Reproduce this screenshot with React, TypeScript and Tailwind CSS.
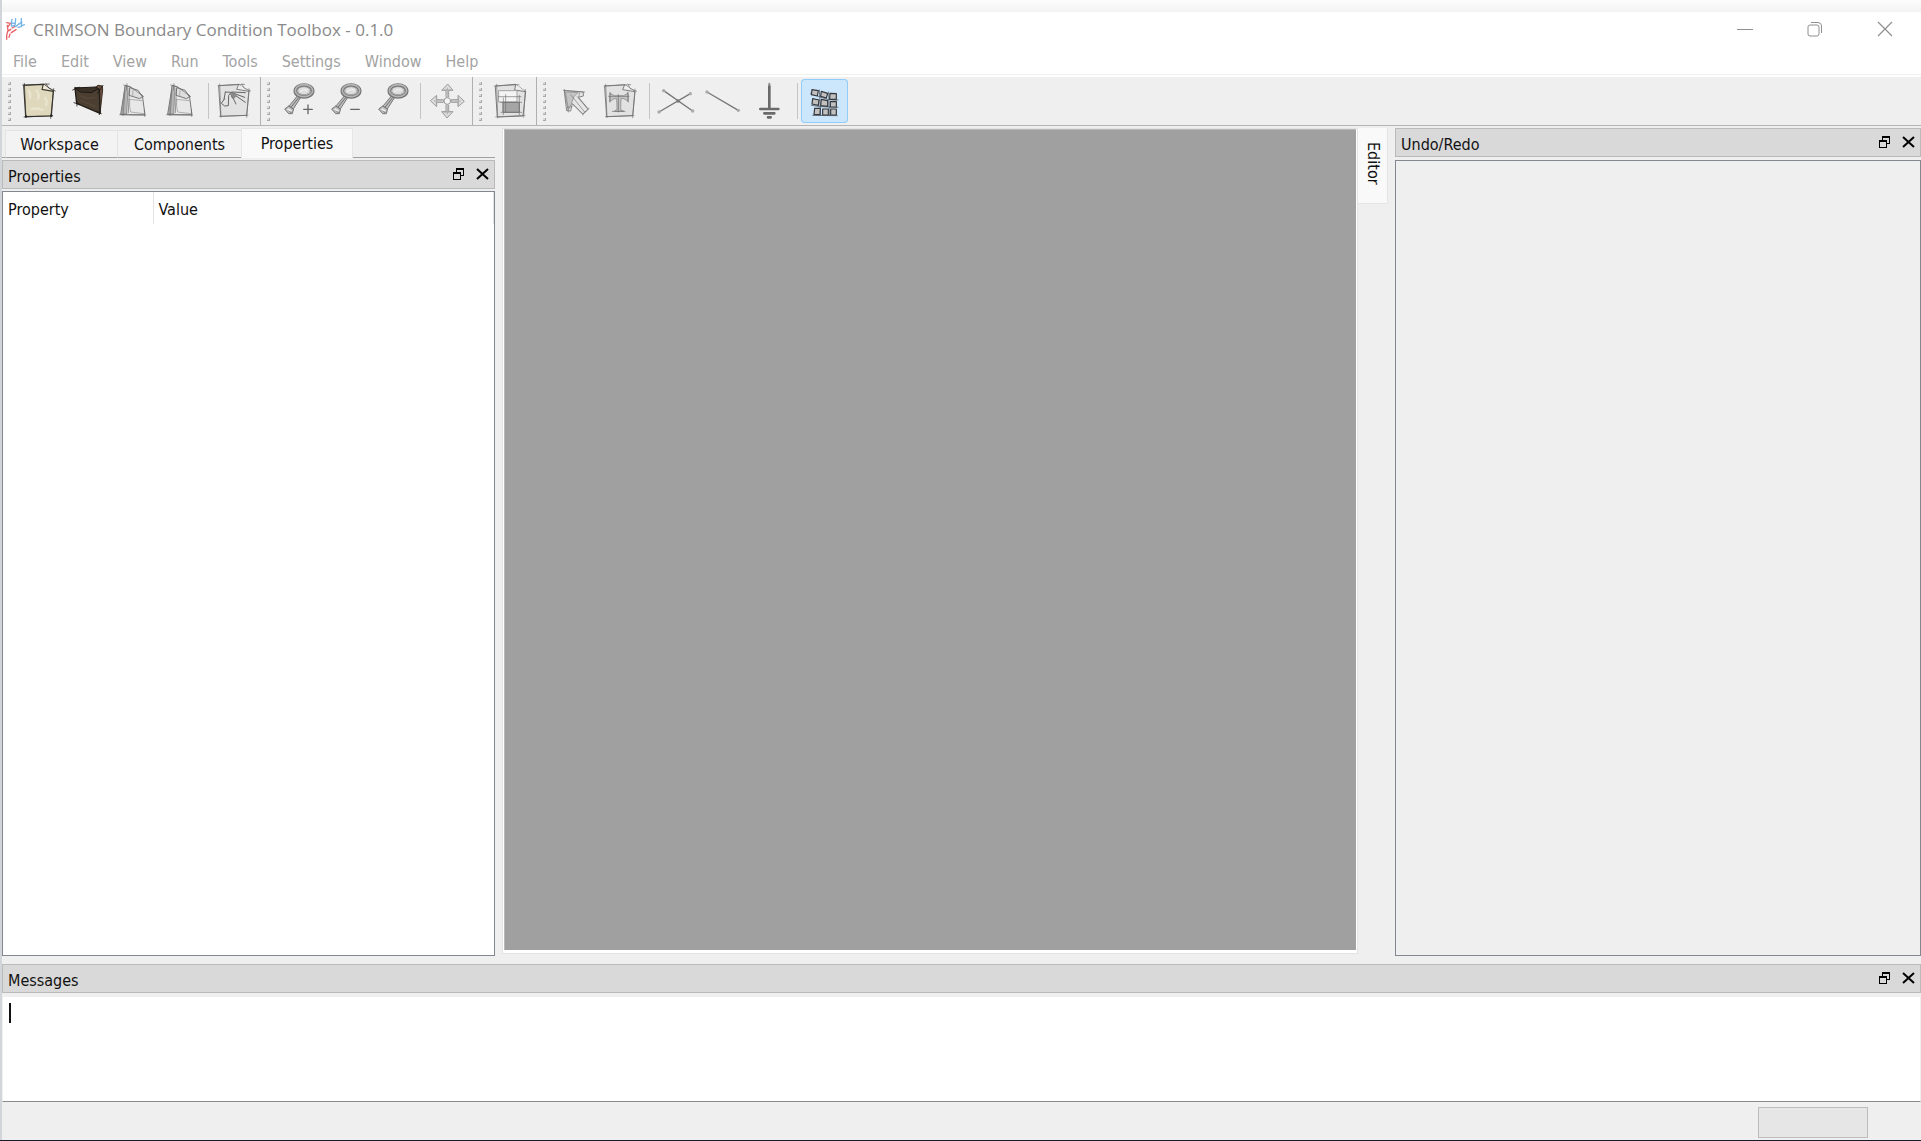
import React from "react";

function Glyph({ box, children }: { box: string; children: React.ReactNode }) {
  return (
    <svg viewBox={box} className="h-[44px] w-[46px]" fill="none" strokeLinecap="round" strokeLinejoin="round" aria-hidden="true">
      {children}
    </svg>
  );
}

function NewIcon() {
  return (
    <Glyph box="52 27 138 132">
      <path d="M69 46 L128 43 L158 64 L152 138 L75 140 Z" fill="#dfd8bd" stroke="#3d3b33" strokeWidth="3.5" />
      <path d="M84 62 Q92 72 88 84 M108 62 Q118 74 112 86 M92 118 Q108 112 126 120 M134 84 Q140 94 136 106" stroke="#e9e4ce" strokeWidth="7" />
      <path d="M128 43 L124 58 L158 64" fill="#f0ecd9" stroke="#3d3b33" strokeWidth="3.5" />
      <path d="M66 45 L146 42 M71 40 L76 143 M150 145 L159 56 M70 141 L156 137 M136 41 L144 54 L164 63" stroke="#2f2e28" strokeWidth="2" />
      <circle cx="76" cy="139" r="3.5" fill="#222" />
      <circle cx="152" cy="137" r="3.5" fill="#222" />
    </Glyph>
  );
}

function OpenIcon() {
  return (
    <Glyph box="193 27 138 132">
      <path d="M284 52 L292 46 L305 48 L306 60 L298 130 Z" fill="#6b5040" stroke="#3a2d22" strokeWidth="3" />
      <path d="M223 54 L296 58 L298 130 L228 100 Z" fill="#4b3f32" stroke="#211c17" strokeWidth="4" />
      <path d="M223 54 L284 51 L294 56 L272 68 L240 66 Z" fill="#3b3026" stroke="#1f1a15" strokeWidth="3" />
      <path d="M240 78 L262 86 L284 82 M240 92 L262 100 L284 110" stroke="#574a3b" strokeWidth="4" />
      <path d="M216 60 L236 52 M229 108 L228 92 M220 98 L236 103 M296 134 L298 120 M288 124 L302 131 M291 70 L307 46" stroke="#1c1814" strokeWidth="2.5" />
    </Glyph>
  );
}

function SaveIcon() {
  return (
    <Glyph box="333 27 138 132">
      <path d="M374 47 L386 50 L424 76 L432 134 L360 134 Z" fill="#e8e8e8" stroke="#777" strokeWidth="3" />
      <path d="M372 48 L362 132 L377 132 L381 54 Z" fill="#b5b5b5" stroke="#777" strokeWidth="2" />
      <path d="M386 54 L384 76 L416 86 L424 80 L412 62 Z" fill="#dedede" stroke="#777" strokeWidth="3" />
      <path d="M396 60 L395 77 M386 88 Q384 110 389 126 L428 131 M384 88 L424 92" stroke="#b0b0b0" strokeWidth="3" />
      <path d="M378 41 L376 60 M368 45 L388 50 L428 80 M356 134 L434 136 M372 60 L366 137 M430 120 L431 139 M385 60 L382 128" stroke="#6b6b6b" strokeWidth="2" />
    </Glyph>
  );
}

function PaperOutline() {
  return (
    <>
      <path d="M655 47 L714 43 L745 64 L738 136 L661 139 Z" fill="#e2e2e2" stroke="#808080" strokeWidth="3" />
      <path d="M714 43 L708 58 L745 64" fill="#eee" stroke="#808080" strokeWidth="3" />
      <path d="M652 47 L732 43 M657 42 L661 142 M738 142 L745 56 M656 139 L742 136 M724 41 L730 54 L750 63" stroke="#707070" strokeWidth="2" />
    </>
  );
}

function ExportIcon() {
  return (
    <Glyph box="637 27 138 132">
      <PaperOutline />
      <path d="M674 66 L670 88 M674 66 L692 67 L684 76 L683 107 L672 108 L662 100 L672 86 M690 70 L706 102 M692 68 L734 97 M694 66 L734 68 M694 68 L732 82 M690 70 L695 84 L704 80" stroke="#666" strokeWidth="3" />
      <path d="M684 66 L710 74 L700 86 Z" fill="#8b8b8b" />
    </Glyph>
  );
}

function LensIcon({ sign }: { sign?: "plus" | "minus" }) {
  return (
    <Glyph box="52 27 138 132">
      <path d="M113 78 L89 107 L75 117 L87 131 L98 131 L102 115 L122 84 Z" fill="#bdbdbd" stroke="#777" strokeWidth="3" />
      <path d="M116 84 L94 112 M82 114 L94 128 M88 108 L101 117" stroke="#6e6e6e" strokeWidth="3" />
      <path d="M84 117 L94 122" stroke="#eee" strokeWidth="5" />
      <ellipse cx="133" cy="63" rx="26" ry="18" stroke="#737373" strokeWidth="11" />
      <ellipse cx="133" cy="62" rx="26" ry="18" stroke="#b5b5b5" strokeWidth="5" />
      <ellipse cx="133" cy="62" rx="19" ry="12" fill="#dedede" stroke="#7b7b7b" strokeWidth="2" />
      <path d="M122 64 Q131 54 142 60" stroke="#f4f4f4" strokeWidth="3" />
      {sign && <path d="M132 118 H158" stroke="#666" strokeWidth="4" />}
      {sign === "plus" && <path d="M145 105 V131" stroke="#666" strokeWidth="4" />}
    </Glyph>
  );
}

function MoveIcon() {
  return (
    <Glyph box="495 27 138 132">
      <g fill="#dcdcdc" stroke="#9c9c9c" strokeWidth="3">
        {[0, 90, 180, 270].map((angle) => (
          <g key={angle} transform={`rotate(${angle} 562 93)`}>
            <path d="M558 80 V61 H545 L563 42 L579 61 H566 V80 Z" />
            <path d="M553 60 H573 M562 54 V76" strokeWidth="2" />
          </g>
        ))}
        <circle cx="562" cy="93" r="10" fill="#f4f4f4" />
      </g>
    </Glyph>
  );
}

function OverviewIcon() {
  return (
    <Glyph box="688 27 138 132">
      <path d="M708 48 L768 43 L798 65 L790 138 L714 141 Z" fill="#e2e2e2" stroke="#7a7a7a" strokeWidth="3" />
      <path d="M768 43 L765 60 L798 65" fill="#eee" stroke="#7a7a7a" strokeWidth="3" />
      <path d="M718 62 H772 V96 H718 Z" fill="#f4f4f4" stroke="#a3a3a3" strokeWidth="3" />
      <path d="M731 97 H779 V127 H731 Z" fill="#a5a5a5" stroke="#7a7a7a" strokeWidth="3" />
      <path d="M731 84 V134 M779 76 V134 M722 97 H786 M724 127 H786 M738 74 V127 M716 80 H784 M704 48 L778 44 M711 43 L714 144 M792 142 L797 58 M708 141 L796 136" stroke="#747474" strokeWidth="2" />
    </Glyph>
  );
}

function PointerIcon() {
  return (
    <Glyph box="45 27 138 132">
      <path d="M80 62 L136 66 L136 78 L121 82 L151 117 L134 132 L103 101 L98 123 L87 122 Z" fill="#e5e5e5" stroke="#858585" strokeWidth="3" />
      <path d="M84 66 L120 68 L108 80 L102 96 L92 118 Z" fill="#c4c4c4" stroke="#858585" strokeWidth="2" />
      <path d="M76 61 L140 66 M79 58 L91 126 M98 74 L140 126 M134 134 L154 115 M104 102 L136 134 M118 80 L148 116 M124 68 L123 80 M88 112 L102 110" stroke="#787878" strokeWidth="2" />
    </Glyph>
  );
}

function TextBlockIcon() {
  return (
    <Glyph box="185 27 138 132">
      <g transform="translate(-455 1)">
        <PaperOutline />
      </g>
      <path d="M216 70 L228 77 H256 L269 69 L270 94 L256 86 H248 L247 118 L256 124 H228 L236 118 L235 86 H228 L215 94 Z" fill="#c2c2c2" stroke="#808080" strokeWidth="2" />
      <path d="M211 79 H272 M215 67 V96 M269 66 V96 M240 74 V126 M222 124 H260" stroke="#6a6a6a" strokeWidth="2" />
    </Glyph>
  );
}

function CrossIcon() {
  return (
    <Glyph box="350 27 138 132">
      <path d="M379 62 L466 123 M459 71 L365 126" stroke="#777" strokeWidth="4" />
      <circle cx="422" cy="93" r="5" fill="#777" />
      <g fill="#aaa">
        <circle cx="379" cy="62" r="5" />
        <circle cx="466" cy="123" r="5" />
        <circle cx="459" cy="71" r="5" />
        <circle cx="365" cy="126" r="5" />
      </g>
    </Glyph>
  );
}

function LineIcon() {
  return (
    <Glyph box="490 27 138 132">
      <path d="M508 66 L602 121" stroke="#777" strokeWidth="4" />
      <circle cx="508" cy="66" r="5" fill="#aaa" />
      <circle cx="602" cy="121" r="5" fill="#aaa" />
    </Glyph>
  );
}

function GroundIcon() {
  return (
    <Glyph box="631 27 138 132">
      <path d="M695 42 V48" stroke="#999" strokeWidth="7" />
      <path d="M695 50 V114" stroke="#6a6a6a" strokeWidth="8" />
      <path d="M668 117 H722 M680 130 H710 M691 142 H699" stroke="#6a6a6a" strokeWidth="8" />
    </Glyph>
  );
}

function GridIcon() {
  const cells = [
    "M824 57 L843 60 L840 76 L822 72 Z",
    "M852 62 L871 68 L867 82 L850 77 Z",
    "M878 68 L897 69 L897 86 L877 86 Z",
    "M826 84 L845 88 L843 104 L824 100 Z",
    "M852 86 L871 90 L871 107 L850 105 Z",
    "M879 93 L897 92 L897 109 L879 109 Z",
    "M832 113 L849 113 L848 132 L830 132 Z",
    "M856 115 L873 115 L873 133 L856 133 Z",
    "M880 115 L897 115 L897 133 L880 133 Z",
  ];
  return (
    <Glyph box="794 25 138 132">
      <path d="M820 68 L846 78 L874 87 L902 88 M822 104 L850 108 L902 110 M846 58 L850 134 M874 64 L876 135 M826 134 L900 135" stroke="#3d4146" strokeWidth="2" />
      {cells.map((d) => (
        <path key={d} d={d} fill="#c3c1c0" stroke="#35383c" strokeWidth="3.5" />
      ))}
    </Glyph>
  );
}

function Tool({ label, on, children }: { label: string; on?: boolean; children: React.ReactNode }) {
  return (
    <button
      type="button"
      aria-label={label}
      aria-pressed={on}
      className={
        on
          ? "flex h-[44px] w-[47px] items-center justify-center rounded-[4px] bg-[#cce6fc] ring-1 ring-inset ring-[#90cdfb]"
          : "flex h-[44px] w-[47px] items-center justify-center"
      }
    >
      {children}
    </button>
  );
}

function Split() {
  return (
    <div className="flex h-9 w-[7px] justify-center">
      <div className="w-px bg-[#c4c4c4]" />
    </div>
  );
}

function ToolGroup({ last, children }: { last?: boolean; children: React.ReactNode }) {
  return (
    <div
      className={
        last
          ? "flex items-center"
          : "flex items-center border-r border-[#b0b0b0] pr-px"
      }
    >
      <div className="flex w-[15px] flex-col gap-[3px] pl-[6px]">
        {[0, 1, 2, 3, 4, 5, 6].map((i) => (
          <div key={i} className="size-[3px] border-b border-r border-[#a8a8a8] bg-[#dadada]" />
        ))}
      </div>
      {children}
    </div>
  );
}

function FloatGlyph() {
  return (
    <svg viewBox="0 0 13 14" className="h-[14px] w-[13px]" fill="none" stroke="#000" aria-hidden="true" shapeRendering="crispEdges">
      <path d="M4.5 5 V1 M4 1.5 H12 M4 2.5 H12 M11.5 1 V9 M9 8.5 H12" />
      <path d="M1 5.5 H9 M1 6.5 H9 M1.5 5 V13 M8.5 5 V13 M1 12.5 H9" />
    </svg>
  );
}

function CloseGlyph() {
  return (
    <svg viewBox="0 0 13 14" className="h-[14px] w-[13px]" fill="none" stroke="#000" strokeWidth="2" aria-hidden="true">
      <path d="M1 2 L12 12 M12 2 L1 12" />
    </svg>
  );
}

function DockTitle({ title }: { title: string }) {
  return (
    <div className="flex h-[29px] shrink-0 items-center border border-[#bababa] bg-[#d9d9d9] px-[5px]">
      <h2 className="flex-1 pt-1 leading-5">{title}</h2>
      <div className="flex gap-[11px] pb-[2px]">
        <button type="button" aria-label={`Float ${title}`}>
          <FloatGlyph />
        </button>
        <button type="button" aria-label={`Close ${title}`}>
          <CloseGlyph />
        </button>
      </div>
    </div>
  );
}

const menus = ["File", "Edit", "View", "Run", "Tools", "Settings", "Window", "Help"];

export default function App() {
  return (
    <div className="flex min-h-screen flex-col border-b border-[#1b1c2a] bg-[#efefef] font-['DejaVu_Sans_Condensed','DejaVu_Sans',sans-serif] text-[16px] text-[#111]">
      <div className="flex flex-1 flex-col border-l-2 border-[#d2d5da]">
        <div className="h-3 bg-gradient-to-b from-[#fdfdfd] to-[#f3f3f3]" />

        <header className="bg-white">
          <div className="flex h-[36px] items-center pl-1">
            <svg viewBox="20 22 60 72" className="h-6 w-5" fill="none" strokeLinecap="round" strokeLinejoin="round" aria-hidden="true">
              <path d="M22 86 V74 L25 62 L34 56 M29 80 L32 70 M22 36 L33 38 L27 47 M24 44 L26 60 M36 66 L50 57 M38 52 L46 48" stroke="#ea6168" strokeWidth="4" />
              <path d="M38 26 L36 36 L44 38 M37 36 L36 46 M49 24 L47 44 L40 46 M58 40 L49 48 M66 22 V34 L60 40 M67 34 L66 46 L75 42 M56 50 L66 48" stroke="#74b4e6" strokeWidth="4" />
            </svg>
            <h1 className="flex-1 pl-[7px] font-['Open_Sans',sans-serif] text-[17px] leading-6 text-[#8a8a8a]">
              CRIMSON Boundary Condition Toolbox - 0.1.0
            </h1>
            <div className="flex gap-[54px] pb-[2px] pr-7">
              <button type="button" aria-label="Minimize">
                <svg viewBox="0 0 16 16" className="size-4" stroke="#8f8f8f"><path d="M0 8.5 H16" /></svg>
              </button>
              <button type="button" aria-label="Restore">
                <svg viewBox="0 0 16 16" className="size-4" fill="none" stroke="#8f8f8f">
                  <rect x="1" y="4" width="11" height="11" rx="2" />
                  <path d="M4 1.5 H11 Q14.500 1.500 14.500 5 V12" />
                </svg>
              </button>
              <button type="button" aria-label="Close window">
                <svg viewBox="0 0 16 16" className="size-4" stroke="#8f8f8f" strokeWidth="1.2"><path d="M1 1 L15 15 M15 1 L1 15" /></svg>
              </button>
            </div>
          </div>
          <nav className="flex h-[26px] items-center gap-6 pl-[11px] pt-[2px] text-[#a3a3a3]">
            {menus.map((m) => (
              <button key={m} type="button" className="leading-6">
                {m}
              </button>
            ))}
          </nav>
          <div className="h-[3px] border-t border-[#f0f0f0]" />
        </header>

        <div className="flex h-[49px] border-b border-[#b4b4b4]" role="toolbar" aria-label="Main toolbar">
          <ToolGroup>
            <Tool label="New"><NewIcon /></Tool>
            <Tool label="Open"><OpenIcon /></Tool>
            <Tool label="Save"><SaveIcon /></Tool>
            <Tool label="Save as"><SaveIcon /></Tool>
            <Split />
            <Tool label="Export"><ExportIcon /></Tool>
          </ToolGroup>
          <ToolGroup>
            <Tool label="Zoom in"><LensIcon sign="plus" /></Tool>
            <Tool label="Zoom out"><LensIcon sign="minus" /></Tool>
            <Tool label="Zoom reset"><LensIcon /></Tool>
            <Split />
            <Tool label="Pan"><MoveIcon /></Tool>
          </ToolGroup>
          <ToolGroup>
            <Tool label="Overview"><OverviewIcon /></Tool>
          </ToolGroup>
          <ToolGroup last>
            <Tool label="Select"><PointerIcon /></Tool>
            <Tool label="Text"><TextBlockIcon /></Tool>
            <Split />
            <Tool label="Connector"><CrossIcon /></Tool>
            <Tool label="Line"><LineIcon /></Tool>
            <Tool label="Ground"><GroundIcon /></Tool>
            <Split />
            <Tool label="Snap to grid" on><GridIcon /></Tool>
          </ToolGroup>
        </div>

        <main className="flex flex-1 pb-2 pt-[2px]">
          <section className="flex w-[493px] shrink-0 flex-col">
            <div className="flex h-[30px] items-end" role="tablist">
              <div className="h-full w-[3px] border-b border-[#a0a0a0]" />
              <button type="button" role="tab" aria-selected="false" className="h-[28px] w-[112px] border-b border-l border-t border-[#e3e3e3] border-b-[#a0a0a0] bg-[#f3f3f3] pr-1 pt-[2px]">
                Workspace
              </button>
              <button type="button" role="tab" aria-selected="false" className="h-[28px] w-[124px] border-b border-l border-t border-[#e3e3e3] border-b-[#a0a0a0] bg-[#f3f3f3] pt-[2px]">
                Components
              </button>
              <button type="button" role="tab" aria-selected="true" className="h-full w-[112px] border-x border-t border-[#e6e6e6] bg-[#f9f9f9]">
                Properties
              </button>
              <div className="h-full flex-1 border-b border-[#a0a0a0]" />
            </div>
            <div className="flex flex-1 flex-col gap-[2px] pt-[2px]">
              <DockTitle title="Properties" />
              <div className="flex-1 border border-[#828790] bg-white">
                <table className="w-full table-fixed text-left">
                  <thead>
                    <tr className="h-8">
                      <th className="w-[150px] border-r border-[#e3e3e3] pl-[5px] pt-1 font-normal">Property</th>
                      <th className="border-r border-[#e3e3e3] pl-[5px] pt-1 font-normal">Value</th>
                    </tr>
                  </thead>
                </table>
              </div>
            </div>
          </section>

          <section className="flex flex-1 pb-[2px] pl-[7px]">
            <div className="flex flex-1 border border-[#e3e3e3] bg-white pb-[3px] pl-px pr-px">
              <div className="flex-1 border-l border-t border-[#b8b8b8] bg-[#a0a0a0]" />
            </div>
            <button
              type="button"
              role="tab"
              aria-selected="true"
              className="flex h-[76px] w-[30px] items-center justify-start border-b border-r border-[#e5e5e5] bg-[#f9f9f9] pt-[14px] leading-5 [writing-mode:vertical-rl]"
            >
              Editor
            </button>
          </section>

          <section className="ml-[7px] flex w-[526px] shrink-0 flex-col gap-[3px]">
            <DockTitle title="Undo/Redo" />
            <div className="flex-1 border border-[#828790] bg-[#efefef]" />
          </section>
        </main>

        <section>
          <DockTitle title="Messages" />
          <div className="relative mt-1 h-[105px] border-x border-b border-x-[#efefef] border-b-[#8a8a8a] bg-white">
            <textarea aria-label="Messages" readOnly className="block h-full w-full resize-none px-2 py-1 outline-none" />
            <div className="absolute left-[6px] top-[6px] h-[20px] w-[2px] bg-[#111]" />
          </div>
        </section>

        <footer className="flex h-[38px] justify-end pb-[2px] pr-[53px] pt-[5px]">
          <div role="progressbar" aria-label="Progress" className="w-[110px] border border-[#bcbcbc] bg-[#e6e6e6]" />
        </footer>
      </div>
    </div>
  );
}
